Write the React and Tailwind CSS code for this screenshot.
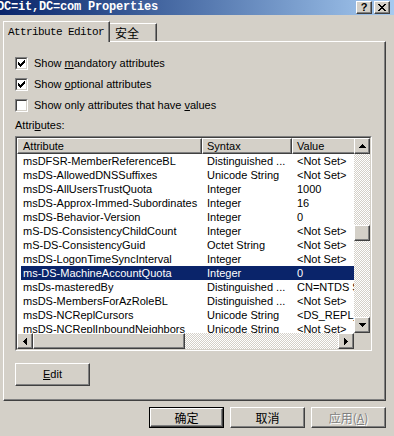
import React from "react";

const RAISED =
  "border border-t-white border-l-white border-r-[#404040] border-b-[#404040] shadow-[inset_-1px_-1px_0_#808080] bg-[#d4d0c8]";
const DITHER =
  "bg-[image:repeating-conic-gradient(#d4d0c8_0%_25%,#ffffff_0%_50%)] bg-[length:2px_2px]";

function Arrow({ dir }) {
  const rects = [];
  if (dir === "up" || dir === "down") {
    for (let i = 0; i < 4; i++) {
      const y = dir === "up" ? i : 3 - i;
      rects.push(<rect key={i} x={3 - i} y={y} width={1 + 2 * i} height={1} />);
    }
    return (
      <svg width="7" height="4" viewBox="0 0 7 4" shapeRendering="crispEdges" fill="#000">
        {rects}
      </svg>
    );
  }
  for (let i = 0; i < 4; i++) {
    const x = dir === "left" ? i : 3 - i;
    rects.push(<rect key={i} x={x} y={3 - i} width={1} height={1 + 2 * i} />);
  }
  return (
    <svg width="4" height="7" viewBox="0 0 4 7" shapeRendering="crispEdges" fill="#000">
      {rects}
    </svg>
  );
}

function SBtn({ dir }) {
  return (
    <div className={`w-[16px] h-[16px] shrink-0 flex items-center justify-center ${RAISED}`}>
      <Arrow dir={dir} />
    </div>
  );
}

function Check() {
  const cols = [
    [1, 3], [2, 4], [3, 5], [4, 4], [5, 3], [6, 2], [7, 1],
  ];
  return (
    <svg width="9" height="9" viewBox="0 0 9 9" shapeRendering="crispEdges" fill="#000">
      {cols.map(([x, y]) => (
        <rect key={x} x={x} y={y} width={1} height={3} />
      ))}
    </svg>
  );
}

function CheckBox({ checked, children }) {
  return (
    <div className="flex items-center gap-[6px] h-[13px]">
      <div className="w-[13px] h-[13px] border border-t-[#808080] border-l-[#808080] border-r-white border-b-white">
        <div className="w-[11px] h-[11px] border border-t-[#404040] border-l-[#404040] border-r-[#d4d0c8] border-b-[#d4d0c8] bg-white">
          {checked && <Check />}
        </div>
      </div>
      <span className="leading-[13px] whitespace-nowrap">{children}</span>
    </div>
  );
}

const rows = [
  ["msDFSR-MemberReferenceBL", "Distinguished ...", "<Not Set>"],
  ["msDS-AllowedDNSSuffixes", "Unicode String", "<Not Set>"],
  ["msDS-AllUsersTrustQuota", "Integer", "1000"],
  ["msDS-Approx-Immed-Subordinates", "Integer", "16"],
  ["msDS-Behavior-Version", "Integer", "0"],
  ["mS-DS-ConsistencyChildCount", "Integer", "<Not Set>"],
  ["mS-DS-ConsistencyGuid", "Octet String", "<Not Set>"],
  ["msDS-LogonTimeSyncInterval", "Integer", "<Not Set>"],
  ["ms-DS-MachineAccountQuota", "Integer", "0"],
  ["msDs-masteredBy", "Distinguished ...", "CN=NTDS Settings,CN=DC"],
  ["msDS-MembersForAzRoleBL", "Distinguished ...", "<Not Set>"],
  ["msDS-NCReplCursors", "Unicode String", "<DS_REPL_CURSOR>"],
  ["msDS-NCReplInboundNeighbors", "Unicode String", "<Not Set>"],
];

export default function App() {
  return (
    <div className="w-[394px] h-[436px] bg-[#d4d0c8] overflow-hidden font-['Liberation_Sans',Arial,sans-serif] text-[11px] text-black">
      {/* Title bar */}
      <div className="h-[15px] flex justify-between bg-linear-to-r from-[#0a246a] to-[#a6caf0] pr-[4px]">
        <span className="ml-[-3px] mt-[1px] font-['Liberation_Mono',monospace] font-bold text-[12px] leading-[13px] text-white tracking-[-0.2px] whitespace-nowrap">
          DC=it,DC=com Properties
        </span>
        <div className="flex gap-[2px] mt-[1px]">
          <div className={`w-[16px] h-[13px] flex items-center justify-center ${RAISED}`}>
            <span className="font-['Liberation_Sans',sans-serif] font-bold text-[11px] leading-none">?</span>
          </div>
          <div className={`w-[16px] h-[13px] flex items-center justify-center ${RAISED}`}>
            <svg width="8" height="7" viewBox="0 0 8 7" shapeRendering="crispEdges" fill="#000">
              <rect x="0" y="0" width="2" height="1" />
              <rect x="6" y="0" width="2" height="1" />
              <rect x="1" y="1" width="2" height="1" />
              <rect x="5" y="1" width="2" height="1" />
              <rect x="2" y="2" width="4" height="1" />
              <rect x="3" y="3" width="2" height="1" />
              <rect x="2" y="4" width="4" height="1" />
              <rect x="1" y="5" width="2" height="1" />
              <rect x="5" y="5" width="2" height="1" />
              <rect x="0" y="6" width="2" height="1" />
              <rect x="6" y="6" width="2" height="1" />
            </svg>
          </div>
        </div>
      </div>

      {/* Tabs */}
      <div className="mt-[6px] ml-[3px] flex items-end">
        <div className="relative z-10 mb-[-1px] w-[107px] h-[21px] bg-[#d4d0c8] border-t border-l border-r border-t-white border-l-white border-r-[#404040] shadow-[inset_-1px_0_0_#808080] pl-[4px] flex items-center">
          <span className="font-['Liberation_Mono',monospace] text-[11px] tracking-[-0.6px] whitespace-nowrap">
            Attribute Editor
          </span>
        </div>
        <div className="w-[47px] h-[18px] border-t border-r border-t-white border-r-[#404040] shadow-[inset_-1px_0_0_#808080] pl-[5px] flex items-center">
          <span className="font-['Noto_Sans_CJK_SC',sans-serif] text-[12px] leading-none">安全</span>
        </div>
      </div>

      {/* Panel */}
      <div className="ml-[3px] w-[383px] h-[360px] border border-t-white border-l-white border-r-[#404040] border-b-[#404040] shadow-[inset_-1px_-1px_0_#808080] pl-[11px] pt-[15px] flex flex-col">
        <div className="flex flex-col gap-[8px]">
          <CheckBox checked>
            Show <span className="underline">m</span>andatory attributes
          </CheckBox>
          <CheckBox checked>
            Show <span className="underline">o</span>ptional attributes
          </CheckBox>
          <CheckBox>
            Show only attributes that have <span className="underline">v</span>alues
          </CheckBox>
        </div>
        <div className="mt-[7px] h-[13px] leading-[13px]">
          Attri<span className="underline">b</span>utes:
        </div>

        {/* List view */}
        <div className="mt-[4px] w-[357px] h-[215px] border border-t-[#808080] border-l-[#808080] border-r-white border-b-white">
          <div className="w-[355px] h-[213px] border border-t-[#404040] border-l-[#404040] border-r-[#d4d0c8] border-b-[#d4d0c8] bg-white grid grid-cols-[337px_16px] grid-rows-[195px_16px]">
            <div className="overflow-hidden">
              <div className="flex h-[16px]">
                <div className={`w-[185px] shrink-0 pl-[5px] flex items-center ${RAISED}`}>Attribute</div>
                <div className={`w-[90px] shrink-0 pl-[4px] flex items-center ${RAISED}`}>Syntax</div>
                <div className={`w-[100px] shrink-0 pl-[4px] flex items-center ${RAISED}`}>Value</div>
              </div>
              {rows.map((r, i) => {
                const sel = i === 8;
                return (
                  <div key={i} className="flex h-[14px] pl-[4px]">
                    <div className={`flex items-center ${sel ? "bg-[#0a246a] text-white" : ""}`}>
                      <div className="w-[181px] shrink-0 pl-[2px] whitespace-nowrap overflow-hidden">{r[0]}</div>
                      <div className="w-[90px] shrink-0 pl-[5px] whitespace-nowrap overflow-hidden">{r[1]}</div>
                      <div className="w-[62px] shrink-0 pl-[5px] whitespace-nowrap overflow-hidden">{r[2]}</div>
                    </div>
                  </div>
                );
              })}
            </div>
            {/* vertical scrollbar */}
            <div className={`flex flex-col ${DITHER}`}>
              <SBtn dir="up" />
              <div className="h-[71px]" />
              <div className={`h-[16px] ${RAISED}`} />
              <div className="flex-1" />
              <SBtn dir="down" />
            </div>
            {/* horizontal scrollbar */}
            <div className={`flex ${DITHER}`}>
              <SBtn dir="left" />
              <div className={`w-[152px] ${RAISED}`} />
              <div className="flex-1" />
              <SBtn dir="right" />
            </div>
            <div className="bg-[#d4d0c8]" />
          </div>
        </div>

        <div className={`mt-[12px] w-[75px] h-[23px] flex items-center justify-center ${RAISED}`}>
          <span>
            <span className="underline">E</span>dit
          </span>
        </div>
      </div>

      {/* Bottom buttons */}
      <div className="mt-[6px] pr-[8px] flex justify-end gap-[6px] font-['Noto_Sans_CJK_SC',sans-serif] text-[12px]">
        <div className="w-[75px] h-[21px] border border-black">
          <div className="w-full h-full border border-t-white border-l-white border-r-[#404040] border-b-[#404040] shadow-[inset_-1px_-1px_0_#808080] flex items-center justify-center leading-none">
            确定
          </div>
        </div>
        <div className={`w-[75px] h-[21px] flex items-center justify-center leading-none ${RAISED}`}>取消</div>
        <div className={`w-[75px] h-[21px] flex items-center justify-center leading-none text-[#808080] [text-shadow:1px_1px_0_#ffffff] ${RAISED}`}>
          <span>
            应用(<span className="underline">A</span>)
          </span>
        </div>
      </div>
    </div>
  );
}
